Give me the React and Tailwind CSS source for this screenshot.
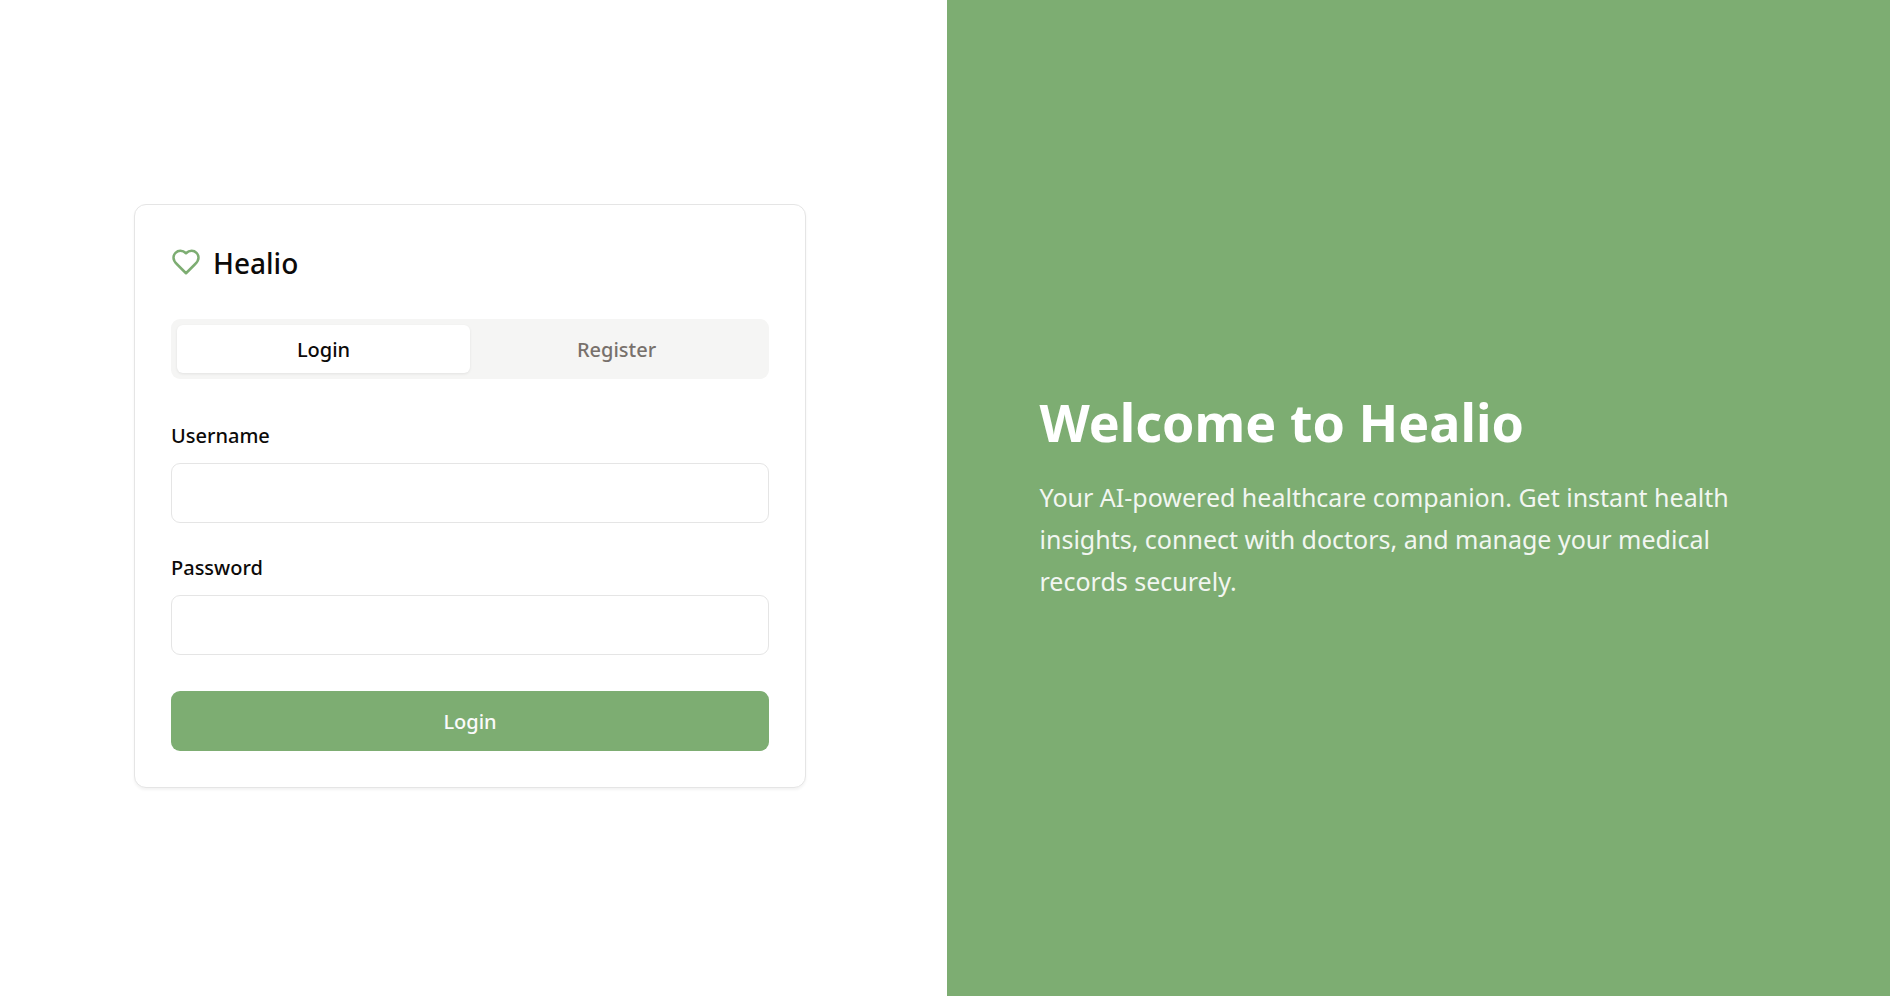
import { useState } from "react";

function HeartIcon() {
  return (
    <svg
      width="30"
      height="30"
      viewBox="0 0 24 24"
      fill="none"
      stroke="currentColor"
      strokeWidth="2"
      strokeLinecap="round"
      strokeLinejoin="round"
      aria-hidden="true"
      className="text-[#7dad72]"
    >
      <path d="M19 14c1.49-1.46 3-3.21 3-5.5A5.5 5.5 0 0 0 16.5 3c-1.76 0-3 .5-4.5 2-1.5-1.5-2.74-2-4.5-2A5.5 5.5 0 0 0 2 8.5c0 2.3 1.5 4.05 3 5.5l7 7Z" />
    </svg>
  );
}

function Field({ id, label, type }) {
  return (
    <div className="flex flex-col gap-[15px]">
      <label htmlFor={id} className="text-[20px] leading-6 font-medium">
        {label}
      </label>
      <input
        id={id}
        name={id}
        type={type}
        className="h-15 w-full rounded-[9px] border border-[#e5e5e5] bg-white px-4 text-[20px] outline-none focus-visible:ring-2 focus-visible:ring-[#7dad72]"
      />
    </div>
  );
}

function Tab({ active, onClick, children }) {
  return (
    <button
      type="button"
      role="tab"
      aria-selected={active}
      onClick={onClick}
      className={
        active
          ? "rounded-md bg-white pt-0.5 text-[20px] leading-7 font-medium text-[#0c0a09] shadow-[0_1px_3px_0_rgb(0_0_0/0.08)]"
          : "rounded-md pt-0.5 text-[20px] leading-7 font-medium text-[#78716c]"
      }
    >
      {children}
    </button>
  );
}

export default function App() {
  const [tab, setTab] = useState("Login");
  return (
    <div className="grid min-h-screen grid-cols-[947fr_943fr] bg-white font-['Noto_Sans','Open_Sans',sans-serif] text-[#0c0a09]">
      <main className="flex items-center justify-center pr-[7px] pb-1">
        <div className="w-full max-w-2xl rounded-xl border border-[#e5e5e5] bg-white p-9 shadow-[0_2px_3px_0_rgb(0_0_0/0.05)]">
          <div className="flex items-center gap-3">
            <HeartIcon />
            <h2 className="pt-0.5 text-[28px] leading-10 font-medium">Healio</h2>
          </div>
          <div role="tablist" className="mt-9 grid h-15 grid-cols-2 rounded-[9px] bg-[#f5f5f4] p-1.5">
            {["Login", "Register"].map((name) => (
              <Tab key={name} active={tab === name} onClick={() => setTab(name)}>
                {name}
              </Tab>
            ))}
          </div>
          <form className="mt-[45px] flex flex-col gap-[33px]" onSubmit={(e) => e.preventDefault()}>
            <Field id="username" label="Username" type="text" />
            <Field id="password" label="Password" type="password" />
            <button
              type="submit"
              className="mt-[3px] h-15 w-full rounded-[9px] bg-[#7dad72] pt-0.5 text-[20px] leading-7 font-medium text-[#fafafa]"
            >
              {tab}
            </button>
          </form>
        </div>
      </main>
      <aside className="flex items-center justify-center bg-[#7dad72] pb-0.5 pl-[10px] text-white">
        <div className="w-full max-w-3xl">
          <h1 className="text-[52px] leading-[60px] font-bold">Welcome to Healio</h1>
          <p className="mt-6 max-w-[720px] text-[25px] leading-[42px] opacity-90">
            Your AI-powered healthcare companion. Get instant health insights, connect with doctors, and manage your
            medical records securely.
          </p>
        </div>
      </aside>
    </div>
  );
}
